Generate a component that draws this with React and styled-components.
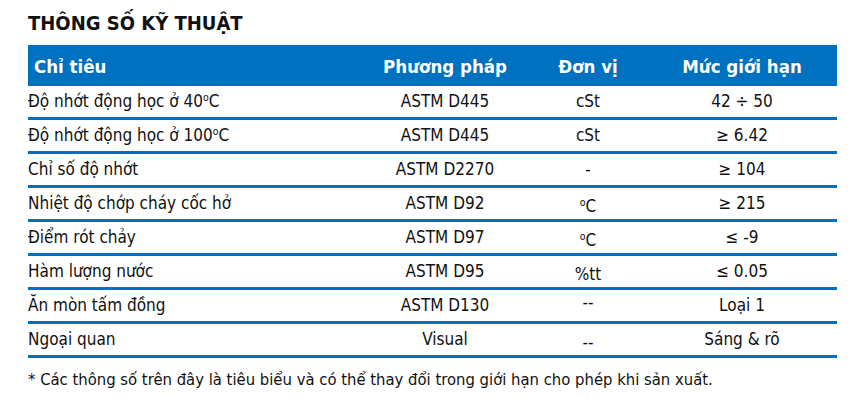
import React from "react";
import styled, { createGlobalStyle } from "styled-components";

const GlobalStyle = createGlobalStyle`
  body {
    margin: 0;
    background: #fff;
    font-family: "DejaVu Sans Condensed", "DejaVu Sans", sans-serif;
    color: #111;
  }
`;

const Deg = () => <Sup>o</Sup>;

const rows = [
  { name: <>Độ nhớt động học ở 40<Deg />C</>, method: "ASTM D445", unit: "cSt", limit: "42 ÷ 50" },
  { name: <>Độ nhớt động học ở 100<Deg />C</>, method: "ASTM D445", unit: "cSt", limit: "≥ 6.42" },
  { name: "Chỉ số độ nhớt", method: "ASTM D2270", unit: "-", limit: "≥ 104" },
  { name: "Nhiệt độ chớp cháy cốc hở", method: "ASTM D92", unit: <><Deg />C</>, limit: "≥ 215", drop: "low" },
  { name: "Điểm rót chảy", method: "ASTM D97", unit: <><Deg />C</>, limit: "≤ -9", drop: "low" },
  { name: "Hàm lượng nước", method: "ASTM D95", unit: "%tt", limit: "≤ 0.05", drop: "low" },
  { name: "Ăn mòn tấm đồng", method: "ASTM D130", unit: "--", limit: "Loại 1", drop: "high" },
  { name: "Ngoại quan", method: "Visual", unit: "--", limit: "Sáng & rõ", drop: "low" },
];

export default function App() {
  return (
    <>
      <GlobalStyle />
      <Page>
        <Title>THÔNG SỐ KỸ THUẬT</Title>
        <Table>
          <HeadRow>
            <HeadCell $left>Chỉ tiêu</HeadCell>
            <HeadCell>Phương pháp</HeadCell>
            <HeadCell>Đơn vị</HeadCell>
            <HeadCell>Mức giới hạn</HeadCell>
          </HeadRow>
          {rows.map((row, index) => (
            <Row key={index}>
              <Cell $left>{row.name}</Cell>
              <Cell>{row.method}</Cell>
              <Cell $drop={row.drop}>{row.unit}</Cell>
              <Cell>{row.limit}</Cell>
            </Row>
          ))}
        </Table>
        <Note>* Các thông số trên đây là tiêu biểu và có thể thay đổi trong giới hạn cho phép khi sản xuất.</Note>
      </Page>
    </>
  );
}

const Page = styled.div`
  padding: 12px 24px 0 28px;
  width: 809px;
`;

const Title = styled.h1`
  margin: 0 0 11px 0;
  font-size: 20px;
  font-weight: bold;
  line-height: 22px;
  color: #111;
`;

const Table = styled.div`
  display: flex;
  flex-direction: column;
`;

const grid = `
  display: grid;
  grid-template-columns: 333px 168px 118px 190px;
  align-items: center;
`;

const HeadRow = styled.div`
  ${grid}
  height: 41px;
  background: #0070c0;
`;

const HeadCell = styled.div`
  color: #fff;
  font-weight: bold;
  font-size: 18.5px;
  text-align: ${({ $left }) => ($left ? "left" : "center")};
  padding-left: ${({ $left }) => ($left ? "6px" : "0")};
  padding-top: 2px;
`;

const Row = styled.div`
  ${grid}
  height: 31px;
  border-bottom: 3px solid #0070c0;
`;

const Cell = styled.div`
  font-size: 17px;
  color: #111;
  text-align: ${({ $left }) => ($left ? "left" : "center")};
  padding-top: ${({ $drop }) => ($drop === "low" ? "6px" : "0")};
  padding-bottom: ${({ $drop }) => ($drop === "high" ? "8px" : "2px")};
`;

const Sup = styled.span`
  font-size: 0.62em;
  vertical-align: 0.55em;
  line-height: 0;
`;

const Note = styled.p`
  margin: 12px 0 0 0;
  font-size: 16.5px;
  color: #111;
`;
